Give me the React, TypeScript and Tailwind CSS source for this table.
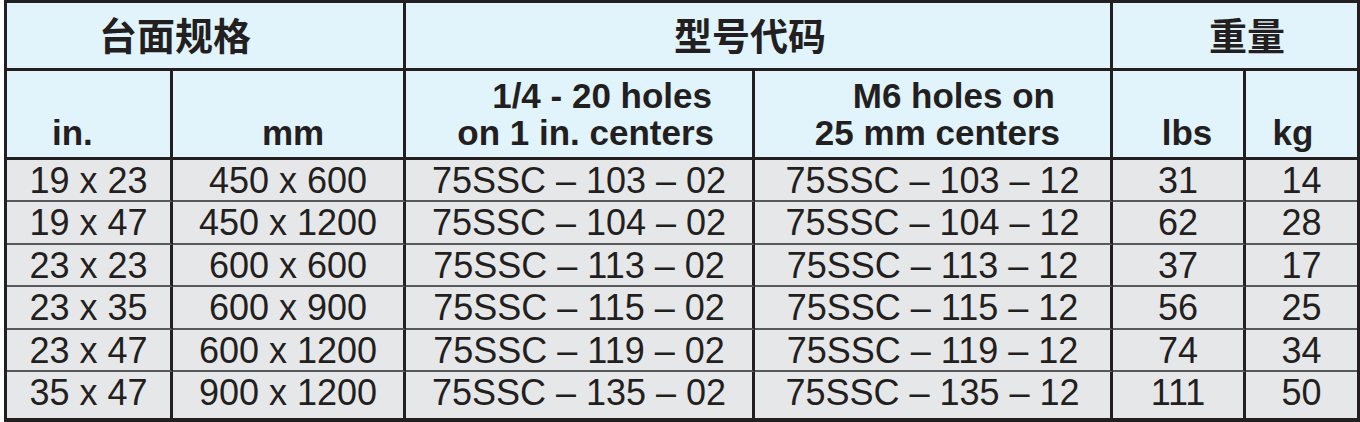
import React from "react";

const rows = [
  ["19 x 23", "450 x 600", "75SSC – 103 – 02", "75SSC – 103 – 12", "31", "14"],
  ["19 x 47", "450 x 1200", "75SSC – 104 – 02", "75SSC – 104 – 12", "62", "28"],
  ["23 x 23", "600 x 600", "75SSC – 113 – 02", "75SSC – 113 – 12", "37", "17"],
  ["23 x 35", "600 x 900", "75SSC – 115 – 02", "75SSC – 115 – 12", "56", "25"],
  ["23 x 47", "600 x 1200", "75SSC – 119 – 02", "75SSC – 119 – 12", "74", "34"],
  ["35 x 47", "900 x 1200", "75SSC – 135 – 02", "75SSC – 135 – 12", "111", "50"],
];

function App() {
  return (
    <div className="w-[1360px] h-[422px] bg-white overflow-hidden font-['Liberation_Sans','Noto_Sans_CJK_SC',sans-serif] text-[#231f20]">
      <div className="ml-[4px] w-[1356px] h-[422px] border-[3px] border-b-4 border-[#231f20]">
        <div className="grid grid-cols-[166px_233px_349px_358px_133px_111px] grid-rows-[68px_89px_42px_43px_42px_43px_42px_46px]">
          {/* header row 1 */}
          <div className="col-span-2 bg-[#e1f3fb] border-r-[3px] border-b-[3px] border-[#231f20] flex items-center justify-center pr-[60px] pt-[2px] text-[38px] font-bold leading-none">
            台面规格
          </div>
          <div className="col-span-2 bg-[#e1f3fb] border-r-[3px] border-b-[3px] border-[#231f20] flex items-center justify-center pr-[16px] pt-[2px] text-[38px] font-bold leading-none">
            型号代码
          </div>
          <div className="col-span-2 bg-[#e1f3fb] border-b-[3px] border-[#231f20] flex items-center justify-center pl-[24px] pt-[2px] text-[38px] font-bold leading-none">
            重量
          </div>

          {/* header row 2 */}
          <div className="bg-[#e1f3fb] border-r-[3px] border-b-[3px] border-[#231f20] flex flex-col justify-end pb-[6px] pl-[45px] text-[35px] font-bold leading-[37px]">
            in.
          </div>
          <div className="bg-[#e1f3fb] border-r-[3px] border-b-[3px] border-[#231f20] flex flex-col justify-end pb-[6px] pl-[10px] text-center text-[35px] font-bold leading-[37px]">
            mm
          </div>
          <div className="bg-[#e1f3fb] border-r-[3px] border-b-[3px] border-[#231f20] flex flex-col justify-end pb-[6px] pr-[38px] text-right text-[35px] font-bold leading-[37px]">
            <span className="pr-[2px]">1/4 - 20 holes</span>
            <span>on 1 in. centers</span>
          </div>
          <div className="bg-[#e1f3fb] border-r-[3px] border-b-[3px] border-[#231f20] flex flex-col justify-end pb-[6px] text-right text-[35px] font-bold leading-[37px]">
            <span className="pr-[55px]">M6 holes on</span>
            <span className="pr-[50px]">25 mm centers</span>
          </div>
          <div className="bg-[#e1f3fb] border-r-[3px] border-b-[3px] border-[#231f20] flex flex-col justify-end pb-[6px] pl-[18px] text-center text-[35px] font-bold leading-[37px]">
            lbs
          </div>
          <div className="bg-[#e1f3fb] border-b-[3px] border-[#231f20] flex flex-col justify-end pb-[6px] pr-[17px] text-center text-[35px] font-bold leading-[37px]">
            kg
          </div>

          {/* body */}
          {rows.map((r, i) =>
            r.map((cell, j) => (
              <div
                key={i + "-" + j}
                className={
                  "bg-[#e6e7e8] text-center text-[36px] leading-[42px] " +
                  (i < rows.length - 1 ? "border-b-2 border-b-[#58595b] " : "") +
                  (j < 5 ? "border-r-[3px] border-r-[#231f20]" : "")
                }
              >
                {cell}
              </div>
            ))
          )}
        </div>
      </div>
    </div>
  );
}

export default App;
